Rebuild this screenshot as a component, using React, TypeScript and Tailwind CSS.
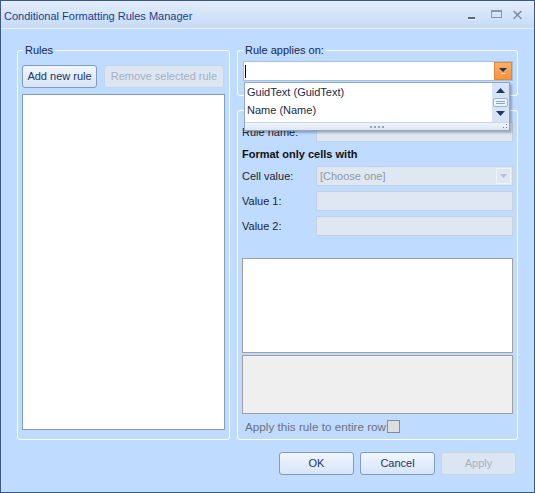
import React from "react";

const font = "font-['Liberation_Sans',Arial,sans-serif]";

function Button({
  children,
  disabled,
  className = "",
}: {
  children: React.ReactNode;
  disabled?: boolean;
  className?: string;
}) {
  return (
    <button
      type="button"
      disabled={disabled}
      className={
        disabled
          ? `h-[23px] rounded-[3px] border border-[#c6d5e8] bg-[#dce6f3] text-[11px] text-[#a6b0be] ${className}`
          : `h-[23px] rounded-[3px] border border-[#7f9bbd] bg-linear-to-b from-[#f1f6fe] to-[#d6e5f8] text-[11px] text-[#1b3566] ${className}`
      }
    >
      {children}
    </button>
  );
}

function Group({
  label,
  className = "",
  children,
}: {
  label?: string;
  className?: string;
  children: React.ReactNode;
}) {
  return (
    <div className={`relative rounded-[3px] border border-white ${className}`}>
      {label && (
        <span className="absolute -top-[8px] left-[5px] bg-[#bfdbff] px-[2px] text-[11px] leading-[14px] text-[#14264a]">
          {label}
        </span>
      )}
      {children}
    </div>
  );
}

function DisabledField({ combo, text }: { combo?: boolean; text?: string }) {
  return (
    <div className="flex h-[20px] w-[197px] items-center border border-[#c4d0df] bg-[#dee7f2]">
      <span className="flex-1 pl-[3px] text-[11px] text-[#8f98a6]">{text}</span>
      {combo && (
        <span className="mr-[1px] flex h-[16px] w-[15px] items-center justify-center border border-[#eef3f9]">
          <svg width="7" height="4" viewBox="0 0 7 4">
            <path d="M0 0h7L3.5 4z" fill="#b9c2ce" />
          </svg>
        </span>
      )}
    </div>
  );
}

function Row({ label, children }: { label: string; children: React.ReactNode }) {
  return (
    <div className="flex h-[20px] items-center">
      <span className="w-[74px] text-[11px] text-[#1e2633]">{label}</span>
      {children}
    </div>
  );
}

function Popup() {
  return (
    <div className="absolute left-0 top-[20px] z-10 flex h-[49px] w-[266px] flex-col border border-[#8ea7c6] bg-white shadow-[2px_2px_2px_rgba(0,0,0,0.25)]">
      <div className="flex h-[39px]">
        <div className="flex-1 text-[11px] text-[#1c2a44]">
          <div className="flex h-[18px] items-center pl-[2px]">GuidText (GuidText)</div>
          <div className="flex h-[18px] items-center pl-[2px]">Name (Name)</div>
        </div>
        <div className="flex w-[17px] flex-col items-center bg-[#d7e4f5]">
          <svg className="mt-[5px]" width="9" height="5" viewBox="0 0 9 5">
            <path d="M4.5 0L9 5H0z" fill="#1f3a63" />
          </svg>
          <div className="mt-[5px] flex h-[9px] w-[15px] flex-col items-center justify-center gap-[1px] rounded-[2px] border border-[#9db3cf] bg-[#eef4fc]">
            <span className="h-px w-[9px] bg-[#8aa3c3]" />
            <span className="h-px w-[9px] bg-[#8aa3c3]" />
          </div>
          <svg className="mt-[4px]" width="9" height="5" viewBox="0 0 9 5">
            <path d="M0 0h9L4.5 5z" fill="#1f3a63" />
          </svg>
        </div>
      </div>
      <div className="relative flex flex-1 items-center justify-center border-t border-[#c8d6e8] bg-linear-to-b from-[#f0f5fb] to-[#dde7f3]">
        <div className="flex gap-[2px]">
          <span className="h-[2px] w-[2px] bg-[#8ea3bf]" />
          <span className="h-[2px] w-[2px] bg-[#8ea3bf]" />
          <span className="h-[2px] w-[2px] bg-[#8ea3bf]" />
          <span className="h-[2px] w-[2px] bg-[#8ea3bf]" />
        </div>
        <svg className="absolute bottom-[1px] right-[1px]" width="5" height="5" viewBox="0 0 5 5">
          <rect x="3" y="0" width="1" height="1" fill="#6b7f99" />
          <rect x="3" y="3" width="1" height="1" fill="#6b7f99" />
          <rect x="0" y="3" width="1" height="1" fill="#6b7f99" />
        </svg>
      </div>
    </div>
  );
}

export default function App() {
  return (
    <div
      className={`flex h-[493px] w-[535px] flex-col overflow-hidden border border-[#3b5a82] bg-[#bfdbff] ${font}`}
    >
      {/* title bar */}
      <div className="flex h-[28px] items-center border-b border-[#e8f1fc] bg-linear-to-b from-[#e3edfb] to-[#c6daf6] pl-[3px] pt-[3px]">
        <span className="flex-1 text-[11px] text-[#15428b]">
          Conditional Formatting Rules Manager
        </span>
        <svg width="60" height="12" viewBox="0 0 60 12" className="mb-[3px] mr-[11px]">
          <rect x="5" y="8" width="7" height="2" fill="#55687f" />
          <rect x="5" y="10" width="7" height="1" fill="#f5f9ff" />
          <rect x="28.5" y="1.5" width="10" height="7" fill="none" stroke="#8b97a8" />
          <rect x="28" y="1" width="11" height="2" fill="#8b97a8" />
          <path
            d="M51 1.5l3.5 3L58 1.5l1 1L55.5 6l3.5 3.5-1 1-3.5-3.5-3.5 3.5-1-1L53.5 6 50 2.5z"
            fill="#7f8ea3"
          />
        </svg>
      </div>

      {/* body */}
      <div className="flex flex-1 flex-col">
        <div className="mt-[21px] flex gap-[7px] px-[16px]">
          <Group label="Rules" className="flex h-[390px] w-[213px] flex-col px-[4px] pb-[9px] pt-[14px]">
            <div className="flex gap-[7px]">
              <Button className="w-[75px]">Add new rule</Button>
              <Button disabled className="w-[120px]">
                Remove selected rule
              </Button>
            </div>
            <div className="mt-[6px] flex-1 border border-[#7f9cc3] bg-white" />
          </Group>

          <div className="flex w-[281px] flex-col gap-[14px]">
            <Group label="Rule applies on:" className="h-[46px] pb-[14px] pl-[5px] pr-[4px] pt-[10px]">
              <div className="relative flex h-[20px] items-center border border-[#a7bfdf] bg-white">
                <span className="ml-[1px] h-[13px] w-px bg-black" />
                <span className="flex-1" />
                <span className="flex h-[18px] w-[18px] items-center justify-center border border-[#e0883c] bg-linear-to-b from-[#fdb066] to-[#f7923d]">
                  <svg width="8" height="6" viewBox="0 0 8 6">
                    <path d="M0 0h8L4 4z" fill="#1b3366" />
                    <rect x="2" y="5" width="4" height="1" fill="#ffe6c8" />
                  </svg>
                </span>
                <Popup />
              </div>
            </Group>

            <Group className="flex h-[330px] flex-col pl-[4px] pr-[4px] pt-[11px]">
              <Row label="Rule name:">
                <DisabledField />
              </Row>
              <div className="flex h-[24px] items-center text-[11px] font-bold text-[#111]">
                Format only cells with
              </div>
              <Row label="Cell value:">
                <DisabledField combo text="[Choose one]" />
              </Row>
              <div className="mt-[5px]">
                <Row label="Value 1:">
                  <DisabledField />
                </Row>
              </div>
              <div className="mt-[5px]">
                <Row label="Value 2:">
                  <DisabledField />
                </Row>
              </div>
              <div className="mt-[22px] h-[95px] border border-[#a0a0a0] bg-white" />
              <div className="mt-[2px] h-[59px] border border-[#a0a0a0] bg-[#efefef]" />
              <div className="mt-[6px] flex h-[13px] items-center pl-[3px]">
                <span className="text-[11.7px] text-[#6e7178]">Apply this rule to entire row</span>
                <span className="ml-[1px] h-[13px] w-[13px] border border-[#8c8c8c] bg-[#dedede]" />
              </div>
            </Group>
          </div>
        </div>

        <div className="mt-[12px] flex justify-end gap-[6px] pr-[18px]">
          <Button className="w-[75px]">OK</Button>
          <Button className="w-[75px]">Cancel</Button>
          <Button disabled className="w-[75px]">
            Apply
          </Button>
        </div>
      </div>
    </div>
  );
}
